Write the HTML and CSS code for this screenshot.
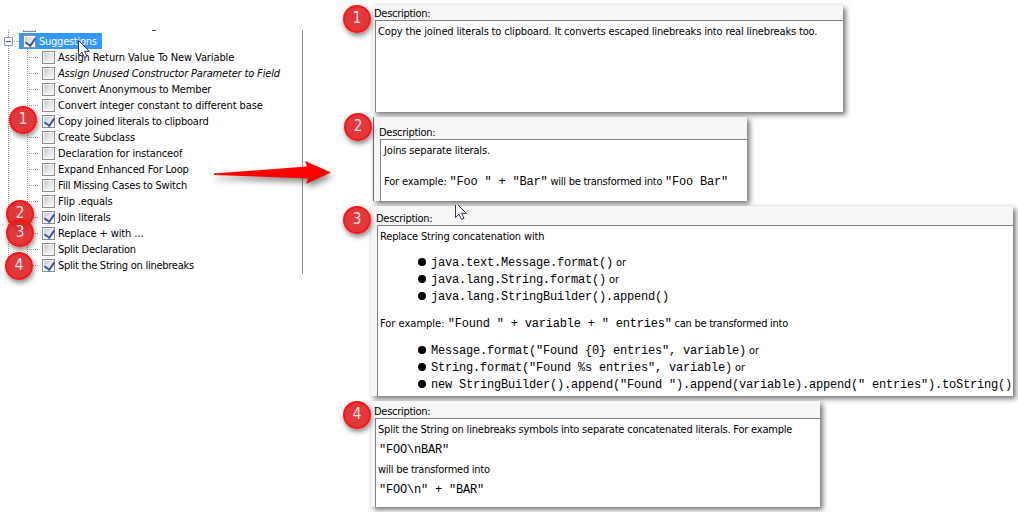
FILE: index.html
```
<!DOCTYPE html>
<html lang="en">
<head>
<meta charset="utf-8">
<title>Suggestions</title>
<link rel="stylesheet" href="styles.css">
</head>
<body>
<main class="page">
  <section class="tree">
    <div class="clipped"><i class="box"></i><i class="tail"></i></div>
    <div class="root"><i class="expander"></i><i class="stub"></i><div class="selected"><i class="box on"></i><span>Suggestions</span></div></div>
    <ul class="items">
      <li><i class="box"></i><span class="wide">Assign Return Value To New Variable</span></li>
      <li><i class="box"></i><em>Assign Unused Constructor Parameter to Field</em></li>
      <li><i class="box"></i><span>Convert Anonymous to Member</span></li>
      <li><i class="box"></i><span class="wide">Convert integer constant to different base</span></li>
      <li><i class="box on"></i><span class="snug">Copy joined literals to clipboard</span></li>
      <li><i class="box"></i><span>Create Subclass</span></li>
      <li><i class="box"></i><span>Declaration for instanceof</span></li>
      <li><i class="box"></i><span>Expand Enhanced For Loop</span></li>
      <li><i class="box"></i><span class="snug">Fill Missing Cases to Switch</span></li>
      <li><i class="box"></i><span>Flip .equals</span></li>
      <li><i class="box on"></i><span>Join literals</span></li>
      <li><i class="box on"></i><span class="wide">Replace + with ...</span></li>
      <li><i class="box"></i><span class="tight">Split Declaration</span></li>
      <li><i class="box on"></i><span class="tight">Split the String on linebreaks</span></li>
    </ul>
  </section>
  <div class="panels">
    <section class="panel p1">
      <h2>Description:</h2>
      <div class="body"><p>Copy the joined literals to clipboard. It converts escaped linebreaks into real linebreaks too.</p></div>
    </section>
    <section class="panel p2">
      <h2>Description:</h2>
      <div class="body"><p>Joins separate literals.</p><p class="gap"><span>For example: </span><code>"Foo " + "Bar"</code><span class="tight"> will be transformed into </span><code>"Foo Bar"</code></p></div>
    </section>
    <section class="panel p3">
      <h2>Description:</h2>
      <div class="body">
        <p>Replace String concatenation with</p>
        <ul>
          <li><code>java.text.Message.format()</code><span> or</span></li>
          <li><code>java.lang.String.format()</code><span> or</span></li>
          <li><code>java.lang.StringBuilder().append()</code></li>
        </ul>
        <p><span class="lead">For example: </span><code>"Found " + variable + " entries"</code><span class="tight"> can be transformed into</span></p>
        <ul>
          <li><code>Message.format("Found {0} entries", variable)</code><span> or</span></li>
          <li><code>String.format("Found %s entries", variable)</code><span> or</span></li>
          <li><code>new StringBuilder().append("Found ").append(variable).append(" entries").toString()</code></li>
        </ul>
      </div>
    </section>
    <section class="panel p4">
      <h2>Description:</h2>
      <div class="body"><p class="snug">Split the String on linebreaks symbols into separate concatenated literals. For example</p><pre>"FOO\nBAR"</pre><p class="tight">will be transformed into</p><pre>"FOO\n" + "BAR"</pre></div>
    </section>
  </div>

  <b class="badge l1">1</b><b class="badge l2">2</b><b class="badge l3">3</b><b class="badge l4">4</b>
  <b class="badge r1">1</b><b class="badge r2">2</b><b class="badge r3">3</b><b class="badge r4">4</b>
  <svg class="arrow" width="130" height="40" viewBox="0 0 130 40"><path d="M4 17.500 97 10.500 95 5l26 11.500L96 28l2-5.500L4 19z" fill="#f00"/></svg>
  <svg class="cursor c1" width="14" height="20" viewBox="0 0 14 20"><path d="M.5.5v15l3.500-3.300 2.500 5.300 2.500-1.100-2.400-5.100h4.700z" fill="#fff" stroke="#2b3350"/></svg>
  <svg class="cursor c2" width="14" height="16" viewBox="0 3 14 16"><path d="M.5.5v15l3.500-3.300 2.500 5.300 2.500-1.100-2.400-5.100h4.700z" fill="#fff" stroke="#2b3350"/></svg>
</main>
</body>
</html>
```
FILE: styles.css
```
* { box-sizing: border-box; }
body { margin: 0; background: #fff; color: #000; font: 11px/16px "DejaVu Sans Condensed", "DejaVu Sans", sans-serif; font-stretch: condensed; letter-spacing: -0.16px; }
.page { position: relative; display: flex; width: 1018px; height: 512px; overflow: hidden; }
h2, p, ul, pre { margin: 0; padding: 0; font: inherit; list-style: none; }
h2, p, pre, li { white-space: pre; }
code, pre { font: 12px/16px "Liberation Mono", monospace; letter-spacing: -0.2px; }
.tight { letter-spacing: -0.26px; }
.snug { letter-spacing: -0.2px; }
.wide { letter-spacing: -0.1px; }
.lead { letter-spacing: 0; }

/* Tree */
.tree { width: 303px; height: 244px; margin-top: 30px; border-right: 1px solid #8c8c8c; background: repeating-linear-gradient(#999 0 1px, transparent 1px 2px) 8px 0 / 1px 100% no-repeat; }
.clipped { display: flex; height: 3px; padding-left: 23px; }
.clipped .box { height: 2px; border-top: 0; }
.tail { width: 4px; height: 1px; margin-left: 116px; background: #444; }
.root { display: flex; align-items: center; height: 16px; padding-left: 4px; }
.root .selected span { letter-spacing: -0.25px; }
.expander { width: 9px; height: 9px; border: 1px solid #8f9aa8; border-radius: 1px; background: linear-gradient(#3b55a0, #3b55a0) center / 5px 1px no-repeat, #f5f5f5; }
.stub { width: 6px; height: 1px; background: repeating-linear-gradient(90deg, transparent 0 1px, #999 1px 2px); }
.selected { display: flex; align-items: center; gap: 3px; width: 83px; height: 16px; padding-left: 4px; background: #3399ff; color: #fff; }
.selected span, .items span, .items em { padding-top: 1px; }
.items { margin-left: 27px; background: repeating-linear-gradient(#999 0 1px, transparent 1px 2px) 0 0 / 1px 216px no-repeat; }
.items li { display: flex; align-items: center; gap: 3px; height: 16px; padding-left: 15px; background: repeating-linear-gradient(90deg, #999 0 1px, transparent 1px 2px) 0 8px / 11px 1px no-repeat; }
.items li span, .items li em { line-height: 17px; }
.box { flex: none; position: relative; width: 13px; height: 13px; border: 1px solid #8b8d8f; background: linear-gradient(135deg, #cdd1d6, #f8f8f8) center / 9px 9px no-repeat, #f6f6f6; }
.box.on::after { content: ""; position: absolute; left: 3px; top: 0; width: 5px; height: 8px; border: solid #39589b; border-width: 0 2px 2px 0; transform: rotate(35deg); }

/* Description panels */
.panels { display: flex; flex-direction: column; align-items: flex-start; gap: 5px; margin-left: 68px; padding-top: 5px; }
.panel { display: flex; flex-direction: column; background: #f6f6f6; box-shadow: 3px 3px 5px rgba(0,0,0,.5), 0 0 3px rgba(0,0,0,.12); }
.panel h2 { line-height: 15px; letter-spacing: -0.28px; }
.body { flex: 1; border: solid #80808c; border-width: 1px 0 0 1px; background: #fff; }
.p1 { width: 470px; height: 107px; margin-left: 2px; padding-left: 2px; }
.p1 h2 { height: 15px; padding-top: 1px; margin-left: -1px; }
.p1 .body { padding: 3px 0 0 2px; }
.p2 { width: 374px; height: 84px; margin-left: 2px; padding-left: 6px; border-left: 1px solid #686868; }
.p2 h2 { height: 22px; padding-top: 8px; margin-left: -1px; }
.p2 .body { padding: 3px 0 0 3px; }
.gap { margin-top: 15px; }
.p3 { width: 642px; height: 190px; padding-left: 6px; }
.p3 h2 { height: 19px; padding-top: 5px; margin-left: -1px; }
.p3 .body { padding: 3px 0 0 2px; }
.p3 ul { margin: 9px 0 11px 38px; }
.p3 ul:last-child { margin: 10px 0 0 38px; }
.p3 li { display: flex; align-items: center; height: 17px; }
.p3 li::before { content: ""; width: 8px; height: 8px; margin: -1px 5px 0 0; border-radius: 50%; background: #000; }
.p4 { width: 449px; height: 106px; padding-left: 4px; }
.p4 h2 { height: 17px; padding-top: 3px; margin-left: -1px; }
.p4 .body { padding: 3px 0 0 2px; }
.p4 pre { margin: 4px 0; padding-left: 1px; }

/* Annotations */
.badge { position: absolute; width: 28px; height: 28px; border: 2px solid #fb1414; border-radius: 50%; background: rgba(222,35,38,.9); box-shadow: 1px 3px 5px rgba(0,0,0,.45); color: #fde4e4; font: 15px/23px "DejaVu Sans Condensed", "DejaVu Sans", sans-serif; text-align: center; letter-spacing: 0; }
.l1 { left: 9px; top: 106px; } .l2 { left: 6px; top: 200px; } .l3 { left: 6px; top: 219px; } .l4 { left: 5px; top: 252px; }
.r1 { left: 343px; top: 5px; } .r2 { left: 344px; top: 113px; } .r3 { left: 343px; top: 206px; } .r4 { left: 343px; top: 401px; }
.arrow { position: absolute; left: 210px; top: 156px; filter: drop-shadow(2px 4px 3px rgba(0,0,0,.45)); overflow: visible; }
.cursor { position: absolute; }
.c1 { left: 78px; top: 40px; } .c2 { left: 455px; top: 205px; }
```
